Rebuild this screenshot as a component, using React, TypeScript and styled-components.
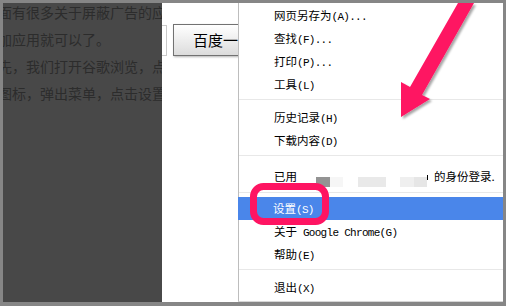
import styled, { createGlobalStyle } from "styled-components"

const GlobalStyle = createGlobalStyle`
  html, body {
    margin: 0;
    padding: 0;
    background: #ffffff;
  }
`

const Stage = styled.div`
  position: relative;
  width: 506px;
  height: 306px;
`

const Frame = styled.div`
  box-sizing: border-box;
  display: flex;
  width: 506px;
  height: 306px;
  border-style: solid;
  border-color: #868686;
  border-width: 3px 3px 4px 3px;
  background: #ffffff;
  overflow: hidden;
`

const DimmedPage = styled.div`
  flex: 0 0 159px;
  background: #484848;
  overflow: hidden;
`

const DimmedLine = styled.div`
  margin-left: -5px;
  font-family: "Noto Sans CJK SC", sans-serif;
  font-size: 14px;
  line-height: 27px;
  color: #2c2c2c;
  white-space: nowrap;
  &:first-child {
    margin-top: -4px;
  }
`

const PageStrip = styled.div`
  flex: 0 0 76px;
  overflow: hidden;
  padding-top: 21px;
  box-sizing: border-box;
`

const SearchRow = styled.div`
  display: flex;
  align-items: flex-start;
  gap: 6px;
  margin-left: -295px;
`

const SearchInput = styled.div`
  box-sizing: border-box;
  flex: 0 0 300px;
  height: 31px;
  margin-top: 1px;
  border: 1px solid #c9c9c9;
  background: #ffffff;
`

const SearchButton = styled.div`
  box-sizing: border-box;
  flex: 0 0 100px;
  height: 32px;
  padding-left: 19px;
  border: 1px solid #727272;
  background: linear-gradient(#ffffff, #dcdcdc);
  box-shadow: 1px 1px 2px rgba(0, 0, 0, 0.3);
  font-family: "Noto Sans CJK SC", sans-serif;
  font-size: 15px;
  line-height: 30px;
  color: #000000;
  white-space: nowrap;
`

const Menu = styled.div`
  flex: 1;
  box-sizing: border-box;
  padding-top: 1px;
  border-left: 1px solid #bdbdbd;
  border-bottom: 1px solid #d6d6d6;
  background: #ffffff;
  font-family: "Noto Sans CJK SC", sans-serif;
  font-size: 11.5px;
  color: #000000;
`

const Item = styled.div<{ $active?: boolean }>`
  height: 23px;
  line-height: 23px;
  padding-left: 35px;
  margin-left: ${(p) => (p.$active ? -1 : 0)}px;
  white-space: nowrap;
  background: ${(p) => (p.$active ? "#4a86ea" : "transparent")};
  color: ${(p) => (p.$active ? "#ffffff" : "#000000")};
`

const SignInItem = styled.div`
  display: flex;
  align-items: center;
  height: 27px;
  padding-left: 35px;
  white-space: nowrap;
`

const Hint = styled.span`
  font-family: "Liberation Mono", monospace;
  font-size: 11px;
  letter-spacing: -0.7px;
  white-space: pre;
`

const Separator = styled.div<{ $tight?: boolean }>`
  height: 1px;
  background: #e8e8e8;
  margin: 3px 0 ${(p) => (p.$tight ? 4 : 6)}px;
`

const Redacted = styled.span<{ $shade: string; $w: number; $gap?: number }>`
  display: inline-block;
  width: ${(p) => p.$w}px;
  height: 10px;
  margin-left: ${(p) => p.$gap ?? 0}px;
  margin-top: 13px;
  background: ${(p) => p.$shade};
`

const Tick = styled.span`
  display: inline-block;
  width: 1px;
  height: 5px;
  margin-top: 3px;
  margin-right: 6px;
  background: #000000;
`

const Annotations = styled.svg`
  position: absolute;
  inset: 0;
  pointer-events: none;
`

type Entry = { label: string; hint?: string }

const MenuItem = ({ label, hint, active }: Entry & { active?: boolean }) => (
  <Item $active={active}>
    {label}
    {hint && <Hint>{hint}</Hint>}
  </Item>
)

const topGroup: Entry[] = [
  { label: "网页另存为", hint: "(A)..." },
  { label: "查找", hint: "(F)..." },
  { label: "打印", hint: "(P)..." },
  { label: "工具", hint: "(L)" },
]

const historyGroup: Entry[] = [
  { label: "历史记录", hint: "(H)" },
  { label: "下载内容", hint: "(D)" },
]

const dimmedText = [
  "面有很多关于屏蔽广告的应用",
  "加应用就可以了。",
  "先，我们打开谷歌浏览，点击",
  "图标，弹出菜单，点击设置。",
]

export default function App() {
  return (
    <>
      <GlobalStyle />
      <Stage>
        <Frame>
          <DimmedPage>
            {dimmedText.map((line) => (
              <DimmedLine key={line}>{line}</DimmedLine>
            ))}
          </DimmedPage>

          <PageStrip>
            <SearchRow>
              <SearchInput />
              <SearchButton>百度一下</SearchButton>
            </SearchRow>
          </PageStrip>

          <Menu>
            {topGroup.map((e) => (
              <MenuItem key={e.label} {...e} />
            ))}
            <Separator />
            {historyGroup.map((e) => (
              <MenuItem key={e.label} {...e} />
            ))}
            <Separator />
            <SignInItem>
              已用
              <Redacted $shade="#939393" $w={14} $gap={19} />
              <Redacted $shade="#f6f6f6" $w={13} />
              <Redacted $shade="#e9e9e9" $w={28} $gap={15} />
              <Redacted $shade="#efefef" $w={14} $gap={14} />
              <Redacted $shade="#e6e6e6" $w={13} />
              <Tick />
              的身份登录.
            </SignInItem>
            <Separator $tight />
            <MenuItem label="设置" hint="(S)" active />
            <MenuItem label="关于" hint=" Google Chrome(G)" />
            <MenuItem label="帮助" hint="(E)" />
            <Separator />
            <MenuItem label="退出" hint="(X)" />
          </Menu>
        </Frame>

        <Annotations width="506" height="306" viewBox="0 0 506 306">
          <defs>
            <filter id="arrowShadow" x="-20%" y="-20%" width="140%" height="140%">
              <feDropShadow dx="2" dy="2" stdDeviation="1" floodColor="#000" floodOpacity="0.35" />
            </filter>
          </defs>
          <polygon
            points="458,3 474,3 422,95 430,99 401,117 401,82 410,87"
            fill="#fe1462"
            filter="url(#arrowShadow)"
          />
          <rect
            x="253.5"
            y="186.5"
            width="72"
            height="35"
            rx="10"
            fill="none"
            stroke="#fe1462"
            strokeWidth="7"
          />
        </Annotations>
      </Stage>
    </>
  )
}
